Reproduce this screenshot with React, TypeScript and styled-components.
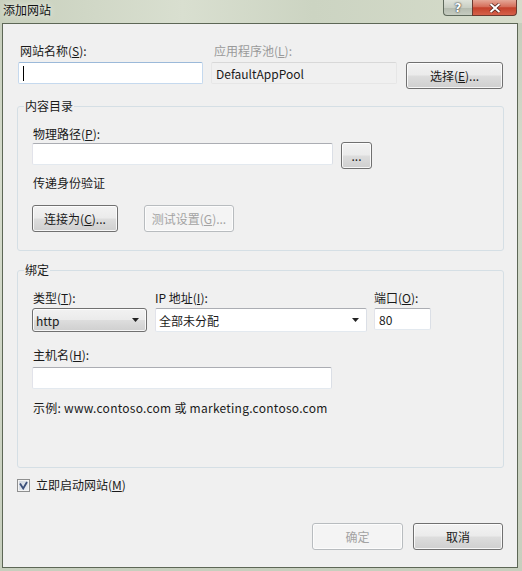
import React from 'react';
import styled, { createGlobalStyle, css } from 'styled-components';

const GlobalStyle = createGlobalStyle`
  html, body {
    margin: 0;
    padding: 0;
    background: #c9d1c1;
  }
  body {
    font-family: "Noto Sans CJK SC", "Microsoft YaHei", sans-serif;
    font-size: 12px;
    color: #1a1a1a;
  }
`;

const Window = styled.div`
  width: 522px;
  height: 571px;
  display: flex;
  flex-direction: column;
  background: linear-gradient(180deg, #c4ccba 0%, #d6dccd 30%, #c7cfbe 100%);
  overflow: hidden;
`;

const TitleBar = styled.div`
  height: 23px;
  flex: 0 0 23px;
  display: flex;
  justify-content: space-between;
  align-items: flex-start;
  background: linear-gradient(90deg, #c8d0bd 0%, #d9dfd0 35%, #ccd4c2 60%, #d6dccb 100%);
`;

const Title = styled.div`
  padding-left: 3px;
  line-height: 20px;
  font-size: 12px;
  color: #111;
  text-shadow: 0 0 6px rgba(255, 255, 255, 0.9);
`;

const CaptionButtons = styled.div`
  display: flex;
  margin-right: 5px;
`;

const CaptionBtn = styled.div<{ $kind: 'help' | 'close' }>`
  height: 15px;
  display: flex;
  align-items: center;
  justify-content: center;
  border: 1px solid #5f6a5c;
  border-top: none;
  ${p =>
    p.$kind === 'help'
      ? css`
          width: 28px;
          border-radius: 0 0 0 4px;
          border-right: none;
          background: linear-gradient(180deg, #dfe3da 0%, #c9cfc4 50%, #b3baae 51%, #c6ccc0 100%);
        `
      : css`
          width: 43px;
          border-radius: 0 0 4px 0;
          border-color: #6b3a30;
          background: linear-gradient(180deg, #e5a897 0%, #d56e5a 45%, #c4412b 52%, #d6614a 100%);
        `}
`;

const HelpGlyph = styled.span`
  font-family: "DejaVu Sans", sans-serif;
  font-weight: bold;
  font-size: 12px;
  line-height: 12px;
  color: #fff;
  text-shadow: 0 0 1px #333, 0 0 2px #333;
`;

const Client = styled.div`
  flex: 1;
  margin: 0 4px 3px 2px;
  border: 1px solid #5d6756;
  background: #f0f0f0;
  padding: 19px 14px 0 15px;
  display: flex;
  flex-direction: column;
`;

const Label = styled.div<{ $disabled?: boolean; $indent?: number; $spacing?: number }>`
  line-height: 16px;
  height: 16px;
  white-space: nowrap;
  padding-left: ${p => p.$indent ?? 1}px;
  letter-spacing: ${p => p.$spacing ?? 0}px;
  color: ${p => (p.$disabled ? '#9a9a9a' : '#1a1a1a')};
`;

const TopRow = styled.div`
  display: grid;
  grid-template-columns: 193px 195px 97px;
  row-gap: 3px;
`;

const TextBox = styled.div<{ $w: number; $focused?: boolean; $readOnly?: boolean }>`
  width: ${p => p.$w}px;
  height: 22px;
  box-sizing: border-box;
  border: 1px solid;
  border-color: #abadb3 #dbdfe6 #e3e9ef #e2e3ea;
  border-radius: 2px;
  background: #fff;
  display: flex;
  align-items: center;
  padding-left: 4px;
  white-space: nowrap;
  ${p =>
    p.$focused &&
    css`
      border-color: #9bb9d9 #c5d9ee #c5d9ee #c5d9ee;
    `}
  ${p =>
    p.$readOnly &&
    css`
      background: #f0f0f0;
      border-color: #d8d8d8 #e6e6e6 #e6e6e6 #e6e6e6;
    `}
`;

const Caret = styled.span`
  width: 1px;
  height: 15px;
  background: #000;
`;

const Button = styled.button<{ $w: number }>`
  width: ${p => p.$w}px;
  height: 27px;
  box-sizing: border-box;
  margin: 0;
  padding: 0 0 1px;
  font: inherit;
  color: #1a1a1a;
  border: 1px solid #707070;
  border-radius: 3px;
  background: linear-gradient(180deg, #f2f2f2 0%, #ebebeb 48%, #dddddd 52%, #cfcfcf 100%);
  box-shadow: inset 0 0 0 1px rgba(255, 255, 255, 0.8);
  white-space: nowrap;
  &:disabled {
    color: #a3a3a3;
    border-color: #b8bcbf;
    background: #f4f4f4;
    box-shadow: inset 0 0 0 1px #fcfcfc;
  }
`;

const Group = styled.fieldset<{ $top: number; $bottom: number }>`
  margin: ${p => p.$top}px -1px 0 -1px;
  padding: 12px 0 ${p => p.$bottom}px 6px;
  border: 1px solid #d5dfe5;
  border-radius: 3px;
  min-width: 0;
`;

const Legend = styled.legend`
  padding: 0 1px;
  line-height: 16px;
  color: #1a1a1a;
`;

const GroupBody = styled.div`
  padding-left: 8px;
  display: flex;
  flex-direction: column;
`;

const Row = styled.div<{ $gap?: number; $top?: number }>`
  display: flex;
  align-items: flex-start;
  gap: ${p => p.$gap ?? 8}px;
  margin-top: ${p => p.$top ?? 0}px;
`;

const Spacer = styled.div<{ $h: number }>`
  height: ${p => p.$h}px;
`;

const BindGrid = styled.div`
  display: grid;
  grid-template-columns: 123px 219px 57px;
  row-gap: 2px;
`;

const Select = styled.div<{ $w: number; $button?: boolean }>`
  width: ${p => p.$w}px;
  height: 24px;
  box-sizing: border-box;
  display: flex;
  align-items: center;
  justify-content: space-between;
  padding: 0 7px 0 3px;
  white-space: nowrap;
  ${p =>
    p.$button
      ? css`
          border: 1px solid #707070;
          border-radius: 3px;
          background: linear-gradient(180deg, #f2f2f2 0%, #ebebeb 48%, #dddddd 52%, #cfcfcf 100%);
          box-shadow: inset 0 0 0 1px rgba(255, 255, 255, 0.8);
        `
      : css`
          border: 1px solid;
          border-color: #abadb3 #dbdfe6 #e3e9ef #e2e3ea;
          border-radius: 2px;
          background: #fff;
        `}
`;

const Arrow = () => (
  <svg width="7" height="4" viewBox="0 0 7 4">
    <path d="M0 0H7L3.5 4Z" fill="#222" />
  </svg>
);

const CheckRow = styled.div`
  display: flex;
  align-items: center;
  gap: 6px;
  margin: 9px 0 0 -1px;
  line-height: 16px;
`;

const CheckBox = styled.div`
  width: 13px;
  height: 13px;
  box-sizing: border-box;
  border: 1px solid #8e8f8f;
  background: linear-gradient(135deg, #cdd4de 0%, #eef1f6 100%);
  box-shadow: inset 0 0 0 1px #f4f4f4;
  display: flex;
  align-items: center;
  justify-content: center;
`;

const Footer = styled.div`
  display: flex;
  justify-content: flex-end;
  gap: 10px;
  margin-top: 30px;
`;

export default function App() {
  return (
    <>
      <GlobalStyle />
      <Window>
        <TitleBar>
          <Title>添加网站</Title>
          <CaptionButtons>
            <CaptionBtn $kind="help">
              <HelpGlyph>?</HelpGlyph>
            </CaptionBtn>
            <CaptionBtn $kind="close">
              <svg width="12" height="10" viewBox="0 0 12 10">
                <path d="M1.5 1L10.5 9M10.5 1L1.5 9" stroke="#4a1f18" strokeWidth="3.4" />
                <path d="M1.5 1L10.5 9M10.5 1L1.5 9" stroke="#fff" strokeWidth="2" />
              </svg>
            </CaptionBtn>
          </CaptionButtons>
        </TitleBar>

        <Client>
          {/* site name / app pool */}
          <TopRow>
            <Label $indent={2}>网站名称(<u>S</u>):</Label>
            <Label $indent={3} $disabled>应用程序池(<u>L</u>):</Label>
            <div />
            <TextBox $w={185} $focused>
              <Caret />
            </TextBox>
            <TextBox $w={186} $readOnly>DefaultAppPool</TextBox>
            <Button $w={97}>选择(<u>E</u>)...</Button>
          </TopRow>

          {/* content directory */}
          <Group $top={9} $bottom={18}>
            <Legend>内容目录</Legend>
            <GroupBody>
              <Label>物理路径(<u>P</u>):</Label>
              <Row>
                <TextBox $w={301} style={{ marginTop: 1 }} />
                <Button $w={31}>...</Button>
              </Row>
              <Spacer $h={6} />
              <Label>传递身份验证</Label>
              <Row $gap={26} $top={14}>
                <Button $w={86}>连接为(<u>C</u>)...</Button>
                <Button $w={90} disabled>
                  测试设置(<u>G</u>)...
                </Button>
              </Row>
            </GroupBody>
          </Group>

          {/* binding */}
          <Group $top={11} $bottom={51}>
            <Legend>绑定</Legend>
            <GroupBody>
              <BindGrid>
                <Label>类型(<u>T</u>):</Label>
                <Label $indent={0}>IP 地址(<u>I</u>):</Label>
                <Label $indent={0}>端口(<u>O</u>):</Label>
                <Select $w={115} $button>
                  http
                  <Arrow />
                </Select>
                <Select $w={212}>
                  全部未分配
                  <Arrow />
                </Select>
                <TextBox $w={57}>80</TextBox>
              </BindGrid>
              <Spacer $h={15} />
              <Label>主机名(<u>H</u>):</Label>
              <Spacer $h={4} />
              <TextBox $w={300} />
              <Spacer $h={11} />
              <Label $spacing={0.25}>示例: www.contoso.com 或 marketing.contoso.com</Label>
            </GroupBody>
          </Group>

          <CheckRow>
            <CheckBox>
              <svg width="9" height="9" viewBox="0 0 9 9">
                <path d="M1 2.5L4.2 7.5L8 1" fill="none" stroke="#3b4f7a" strokeWidth="1.8" />
              </svg>
            </CheckBox>
            <span>立即启动网站(<u>M</u>)</span>
          </CheckRow>

          <Footer>
            <Button $w={91} disabled>
              确定
            </Button>
            <Button $w={90}>取消</Button>
          </Footer>
        </Client>
      </Window>
    </>
  );
}
